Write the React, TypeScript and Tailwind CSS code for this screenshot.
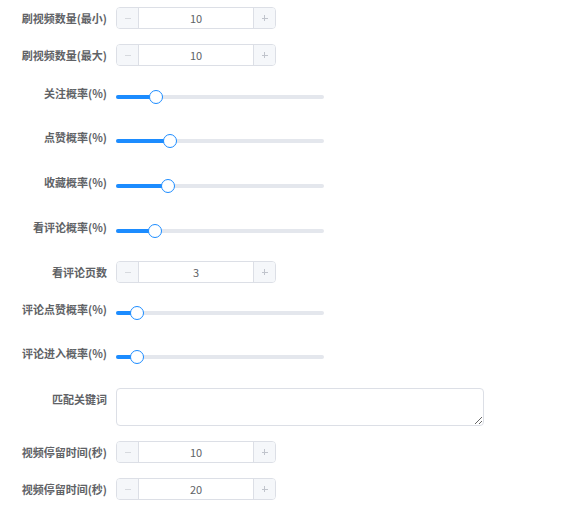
import React from "react";

const font = { fontFamily: '"Noto Sans CJK SC", "Noto Sans", sans-serif' };

function Label({ text, lh }: { text: string; lh: string }) {
  return (
    <div className={`w-[116px] shrink-0 pr-[9px] text-right text-[11px] font-semibold text-[#606266] ${lh}`}>
      {text}
    </div>
  );
}

function NumberInput({ value }: { value: string }) {
  return (
    <div className="flex h-[22px] w-[160px] overflow-hidden rounded-[4px] border border-[#dcdfe6] bg-white">
      <div className="flex w-[22px] shrink-0 items-center justify-center border-r border-[#dcdfe6] bg-[#f5f7fa]">
        <div className="h-px w-[6px] bg-[#d6d9de]" />
      </div>
      <div className="flex flex-1 items-center justify-center text-[11px] text-[#606266]">{value}</div>
      <div className="relative flex w-[22px] shrink-0 items-center justify-center border-l border-[#dcdfe6] bg-[#f5f7fa]">
        <div className="absolute h-px w-[6px] bg-[#c0c4cc]" />
        <div className="absolute h-[6px] w-px bg-[#c0c4cc]" />
      </div>
    </div>
  );
}

function Slider({ pos }: { pos: number }) {
  return (
    <div className="flex h-[32px] items-center">
      <div className="relative h-[4px] w-[208px] rounded-full bg-[#e4e7ed]">
        <div className="absolute left-0 top-0 h-[4px] rounded-full bg-[#1c8cff]" style={{ width: pos }} />
        <div
          className="absolute top-1/2 h-[14px] w-[14px] -translate-x-1/2 -translate-y-1/2 rounded-full border-[1.5px] border-[#1c8cff] bg-white"
          style={{ left: pos }}
        />
      </div>
    </div>
  );
}

function InputRow({ label, value, mb }: { label: string; value: string; mb: string }) {
  return (
    <div className={`flex items-start ${mb}`}>
      <Label text={label} lh="leading-[22px]" />
      <NumberInput value={value} />
    </div>
  );
}

function SliderRow({ label, pos, mb }: { label: string; pos: number; mb: string }) {
  return (
    <div className={`flex items-start ${mb}`}>
      <Label text={label} lh="leading-[24px]" />
      <Slider pos={pos} />
    </div>
  );
}

export default function App() {
  return (
    <div className="min-h-[513px] w-[566px] bg-white pt-[7px]" style={font}>
      <InputRow label="刷视频数量(最小)" value="10" mb="mb-[15px]" />
      <InputRow label="刷视频数量(最大)" value="10" mb="mb-[15px]" />
      <SliderRow label="关注概率(%)" pos={40} mb="mb-[12px]" />
      <SliderRow label="点赞概率(%)" pos={54} mb="mb-[13px]" />
      <SliderRow label="收藏概率(%)" pos={52} mb="mb-[13px]" />
      <SliderRow label="看评论概率(%)" pos={39} mb="mb-[14px]" />
      <InputRow label="看评论页数" value="3" mb="mb-[14px]" />
      <SliderRow label="评论点赞概率(%)" pos={21} mb="mb-[12px]" />
      <SliderRow label="评论进入概率(%)" pos={21} mb="mb-[15px]" />
      <div className="mb-[15px] flex items-start">
        <Label text="匹配关键词" lh="leading-[22px]" />
        <textarea className="block h-[38px] w-[368px] rounded-[4px] border border-[#dcdfe6] bg-white px-[8px] py-[4px] text-[11px] text-[#606266] outline-none" />
      </div>
      <InputRow label="视频停留时间(秒)" value="10" mb="mb-[15px]" />
      <InputRow label="视频停留时间(秒)" value="20" mb="mb-[15px]" />
    </div>
  );
}
